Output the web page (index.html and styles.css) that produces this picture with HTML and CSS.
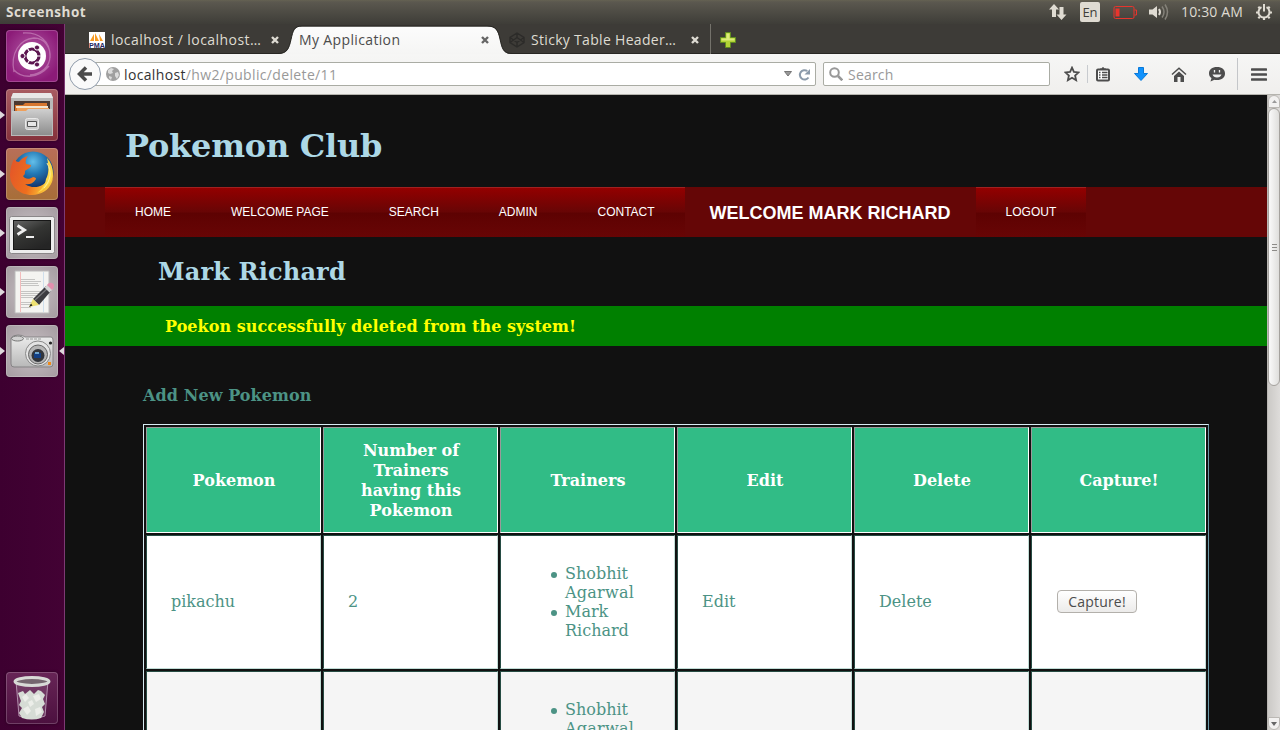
FILE: index.html
```html
<!DOCTYPE html>
<html lang="en">
<head>
<meta charset="utf-8">
<title>My Application</title>
<link rel="stylesheet" href="styles.css">
</head>
<body>
<div class="desktop">
  <header class="panel">
    <span class="panel-title">Screenshot</span>
    <div class="indicators">
      <svg class="ind-net" width="18" height="18" viewBox="0 0 18 18" fill="#dfdbd2"><path d="M5 1l5 5.500H7V14H3V6.500H0zM12.500 17l5-5.500h-3V4h-4v7.500h-3z"/></svg>
      <span class="lang">En</span>
      <svg class="ind-bat" width="24" height="13" viewBox="0 0 24 13"><rect x="1" y=".5" width="20" height="12" rx="1.500" fill="none" stroke="#e8352d"/><path d="M2.500 2.500h4v8h-4z" fill="#e8352d"/><path d="M21.500 4h2v5h-2" fill="none" stroke="#e8352d"/></svg>
      <svg class="ind-vol" width="21" height="18" viewBox="0 0 21 18"><path d="M1 6.500h3.500L9 3v12l-4.500-3.500H1z" fill="#dfdbd2"/><path d="M11 6q2 3 0 6" stroke="#dfdbd2" stroke-width="2" fill="none"/><path d="M14 3.500q4 5.500 0 11M17 1.500q5 7.500 0 15" stroke="#85827a" stroke-width="1.500" fill="none"/></svg>
      <span class="clock">10:30 AM</span>
      <svg class="ind-gear" width="18" height="18" viewBox="0 0 18 18" fill="none" stroke="#dfdbd2"><path d="M6.500 4.200a5.500 5.500 0 1 0 5 0" stroke-width="2"/><path d="M9 1v7.500" stroke-width="2"/><path d="M3.500 9.500H1M17 9.500h-2.500M9 14.500V17M4.800 5.300L3.300 3.800M13.200 5.300l1.500-1.500M4.800 13.700l-1.500 1.500M13.200 13.700l1.500 1.500" stroke-width="2.200"/></svg>
    </div>
  </header>

  <div class="workspace">
    <aside class="launcher">
      <div class="tile tile-dash">
        <svg viewBox="0 0 52 52"><g fill="none" stroke="#d59acb" stroke-opacity=".55" stroke-width="1.300"><path d="M8 42C4 23 14 9 28 8c11 0 17 10 16 20M17 3c16-1 27 8 27 23 0 11-9 18-20 19M8 40c7 8 23 10 35-4"/></g><circle cx="26" cy="26" r="14" fill="#fff"/><circle cx="26" cy="26" r="7" fill="none" stroke="#5c1650" stroke-width="3.200"/><path d="M26 26L38 26M26 26l-6-10M26 26l-6 10" stroke="#fff" stroke-width="1.200"/><g fill="#5c1650" stroke="#fff"><circle cx="16.500" cy="26" r="2.600"/><circle cx="31" cy="17.500" r="2.600"/><circle cx="31" cy="34.500" r="2.600"/></g><circle cx="26" cy="26" r="5.200" fill="#fff"/></svg>
      </div>
      <div class="tile tile-files running">
        <svg viewBox="0 0 52 52"><defs><linearGradient id="cab" x2="0" y2="1"><stop stop-color="#cfcfcf"/><stop offset="1" stop-color="#8d8d8d"/></linearGradient></defs><path d="M7 4h38l2 5v38H5V9z" fill="#b9b9b9"/><path d="M7 4h38l2 5H5z" fill="#e8e8e8"/><path d="M8 12h36v10H8z" fill="#4b3932"/><path d="M9 16h8l2-2h22v8H9z" fill="#d8762e"/><path d="M10 17h32v2H10z" fill="#f5e5cf"/><path d="M11 19h32v3H11z" fill="#efa05b"/><path d="M6 22h14l2-2h24v26H6z" fill="url(#cab)"/><rect x="19.500" y="29.500" width="13" height="11" rx="2" fill="#ccc" stroke="#e8e8e8"/><path d="M21.500 32.500h9v5h-9z" fill="#e7e7e7" stroke="#555"/></svg>
      </div>
      <div class="tile tile-firefox running">
        <svg viewBox="0 0 52 52"><defs><radialGradient id="globe" cx=".5" cy=".25" r=".65"><stop stop-color="#63bfea"/><stop offset=".45" stop-color="#2479b5"/><stop offset="1" stop-color="#122f66"/></radialGradient><linearGradient id="fox" x1="0" x2="1" y2=".3"><stop stop-color="#e2532a"/><stop offset=".6" stop-color="#ee6f1e"/><stop offset="1" stop-color="#fbc63a"/></linearGradient></defs><circle cx="27" cy="24" r="20.500" fill="url(#globe)"/><path d="M8 11c1 2 3 3 5 3 2-3 5-5 9-6-2 3-3 5-2 8l5 1c0 3-4 4-6 6 0 2 0 4-2 5 2 3 6 4 10 1 2 0 3 1 3 2-3 5-8 6-11 5 8 6 20 3 23-6 2-5 2-9 1-14 4 5 5 12 3 18-3 8-11 13-20 13C13 47 4 38 4 27c0-7 2-12 4-16z" fill="url(#fox)"/><path d="M41 10c8 9 8 22-1 29-3 3-6 5-9 6 5-4 8-8 9-14 3-5 3-13 1-21z" fill="#fdd94a"/><path d="M41 15c5 9 4 17-3 25" stroke="#fff1a0" fill="none"/></svg>
      </div>
      <div class="tile tile-gray running">
        <svg viewBox="0 0 52 52"><defs><linearGradient id="term" x2=".6" y2="1"><stop stop-color="#666"/><stop offset=".5" stop-color="#343533"/><stop offset="1" stop-color="#252525"/></linearGradient></defs><rect x="3.500" y="9.500" width="45" height="37" rx="2" fill="#ededed" stroke="#8b8789"/><rect x="7.500" y="13.500" width="37" height="29" fill="url(#term)" stroke="#171717"/><path d="M11.500 18.500l7 4.500-7 4.500" fill="none" stroke="#eee" stroke-width="2.800"/><path d="M20 30h8" stroke="#eee" stroke-width="2"/></svg>
      </div>
      <div class="tile tile-gray running">
        <svg viewBox="0 0 52 52"><path d="M9 5h34v42H9z" fill="#f4f4f1" stroke="#bbb"/><path d="M14.500 6v40" stroke="#f2bcbc"/><path d="M37.500 6v40" stroke="#cfdfec"/><path d="M15 13.500h14M15 15.500h20M15 17.500h17M15 19.500h18M15 25.500h20M15 27.500h18M15 29.500h19M15 31.500h12M15 36.500h12M15 38.500h11M15 41.500h10" stroke="#b9b9b7" stroke-width=".8"/><path d="M27 33L40 20l5 5-12 14z" fill="#3d3d40"/><path d="M29 34l13-12" stroke="#77777a" stroke-width="1.200"/><path d="M38.500 21.500l3-3 5 5-3 3z" fill="#d5d5d5"/><path d="M41 19q2-3 5-2t1.500 5L46 24z" fill="#e28fae"/><path d="M23 41l4-8 6 6z" fill="#eee171"/><path d="M23 41l2-3.500 1.500 2z" fill="#222"/></svg>
      </div>
      <div class="tile tile-gray running focused">
        <svg viewBox="0 0 52 52"><defs><linearGradient id="cam" x2="0" y2="1"><stop stop-color="#eee"/><stop offset="1" stop-color="#b8b8b8"/></linearGradient></defs><path d="M5 13q2-3 7-3 5 0 7 2h26q2 0 2 3v24q0 3-3 3H8q-3 0-3-3V16z" fill="url(#cam)" stroke="#858385"/><ellipse cx="11.500" cy="13.500" rx="6" ry="2.500" fill="#d1d1d1" stroke="#777"/><path d="M20 14h16" stroke="#999" stroke-dasharray="3 1"/><circle cx="32" cy="28.500" r="12.500" fill="#e4e4e4" stroke="#888"/><circle cx="32" cy="29.500" r="9.500" fill="#b5b5b5" stroke="#666"/><circle cx="32" cy="30.500" r="6.500" fill="#33363b"/><path d="M28 28h7v5h-7z" fill="#123f84"/><path d="M29 27h4v2h-4z" fill="#6fa5cd"/><circle cx="44.500" cy="18" r="1.600" fill="#222"/><path d="M42 37h3v3h-3z" fill="#f18a19"/></svg>
      </div>
      <div class="tile tile-trash">
        <svg viewBox="0 0 52 52"><path d="M10 9l3 35q13 5 26 0l3-35" fill="#fff" fill-opacity=".12" stroke="#c7a9c3" stroke-width=".8"/><path d="M12 21l5-2 2 3 5-4 4 4 4-4 3 1 4 4-2 4 2 5-3 3 2 5-3 6q-9 3-19 0l-3-5 3-5-3-3 2-4z" fill="#d6dcd5"/><path d="M16 25l4-3 3 4-4 4zM27 24l6-2 2 5-5 3zM17 37l5-3 3 5-4 4zM29 37l5-2 2 5-6 4zM22 30l4-2 2 4-4 3z" fill="#eceee9"/><ellipse cx="26" cy="9.500" rx="17" ry="4" fill="#75666f" stroke="#d8dad6" stroke-width="3"/></svg>
      </div>
    </aside>

    <main class="browser">
      <div class="tabs">
        <div class="tab tab-first">
          <svg class="favicon" viewBox="0 0 16 16"><path fill="#fff" d="M0 0h16v16H0z"/><path d="M1 9l4-7v7zM6 9V1l4 8zM10 2l4 7h-3z" fill="#f79a20"/><text x="0" y="15.500" class="pma" textLength="16" lengthAdjust="spacingAndGlyphs">PMA</text></svg>
          <span class="tab-label label-one">localhost / localhost…</span>
          <svg class="close" viewBox="0 0 8 8"><path d="M1 1l6 6M7 1L1 7"/></svg>
        </div>
        <div class="tab tab-active">
          <svg class="tab-shape" width="240" height="30" viewBox="0 0 240 30"><defs><linearGradient id="tg" x2="0" y2="1"><stop stop-color="#fcfcfc"/><stop offset="1" stop-color="#f5f5f4"/></linearGradient></defs><path d="M2 30c9 0 11-5 13-14S18 2.500 26 2.500H211c9 0 11 4 13 13s3 14.500 12 14.500z" fill="url(#tg)"/><path d="M2 29.500c9 0 11-5 13-14S18 2 26 2H211c9 0 11 4 13 13s3 14.500 12 14.500" fill="none" stroke="#282723"/></svg>
          <span class="tab-label label-two">My Application</span>
          <svg class="close" viewBox="0 0 8 8"><path d="M1 1l6 6M7 1L1 7"/></svg>
        </div>
        <div class="tab tab-last">
          <svg class="favicon" viewBox="0 0 16 16" fill="none" stroke="#2c2b29" stroke-width="1.400"><path d="M8 1l7 4.500v5L8 15l-7-4.500v-5zM8 1v4.500M8 10.500V15M1 5.500l7 5 7-5M1 10.500l7-5 7 5"/></svg>
          <span class="tab-label label-three">Sticky Table Header…</span>
          <svg class="close" viewBox="0 0 8 8"><path d="M1 1l6 6M7 1L1 7"/></svg>
        </div>
        <svg class="new-tab" viewBox="0 0 16 16"><path d="M5.500.5h5v5h5v5h-5v5h-5v-5h-5v-5h5z" fill="#b2d235" stroke="#608c20"/><path d="M6.500 1.500h3v5h5v2h-13v-2h5z" fill="#dceb7d"/></svg>
      </div>

      <div class="toolbar">
        <div class="back"><svg width="18" height="18" viewBox="0 0 18 18"><path d="M16 9H4M10 2.500L3.500 9l6.500 6.500" fill="none" stroke="#4b4b4b" stroke-width="3.500"/></svg></div>
        <div class="url">
          <svg class="globe" viewBox="0 0 14 14"><circle cx="7" cy="7" r="7" fill="#a0a0a0"/><path d="M2 3l3-2 3 1-2 2 1 2-3 1-2-1zM9 6l3-1 1 3-2 4-2-3zM3 9l3 1-1 3-2-2z" fill="#dcdcdc"/></svg>
          <span class="url-text"><span class="host">localhost</span>/hw2/public/delete/11</span>
          <svg class="drop" width="8" height="6" viewBox="0 0 8 6"><path d="M.5.5h7L4 5z" fill="#999" stroke="#777"/></svg>
          <svg class="reload" width="13" height="13" viewBox="0 0 13 13"><path d="M10.500 9.500A4.700 4.700 0 1 1 9.300 3" fill="none" stroke="#8b9aaa" stroke-width="2"/><path d="M12 1v5.500H6.500z" fill="#8b9aaa"/></svg>
        </div>
        <div class="search">
          <svg width="14" height="14" viewBox="0 0 14 14" fill="none" stroke="#989898"><circle cx="5.500" cy="5.500" r="4.300" stroke-width="2"/><path d="M9 9l4.300 4.300" stroke-width="2.600"/></svg>
          <span class="placeholder">Search</span>
        </div>
        <div class="actions">
          <svg class="star" width="16" height="16" viewBox="0 0 16 16"><path d="M8 1.700l1.900 4.200 4.700.5-3.500 3.100 1 4.700L8 11.800l-4.100 2.400 1-4.700-3.500-3.100 4.700-.5z" fill="none" stroke="#4d4d4d" stroke-width="1.800"/></svg>
          <i class="thin"></i>
          <svg class="clip" width="14" height="16" viewBox="0 0 14 16"><rect x="1" y="3.500" width="12" height="11" rx="1" fill="#fff" stroke="#4d4d4d" stroke-width="2"/><path d="M4 4V2.500h1.500q1.500-3 3 0H10V4z" fill="#4d4d4d"/><path d="M3 6.500h1.500M6 6.500h5.500M3 9h1.500M6 9h5.500M3 11.500h1.500M6 11.500h5.500" stroke="#4d4d4d" stroke-width="1.400"/></svg>
          <svg class="down" width="14" height="14" viewBox="0 0 14 14"><path d="M4.500.5h5v6h4L7 13.500.5 6.500h4z" fill="#1192fc" stroke="#0879d9"/></svg>
          <svg class="home" width="16" height="15" viewBox="0 0 16 15"><path d="M1 7.500l7-6.300 7 6.300" fill="none" stroke="#4d4d4d" stroke-width="1.500"/><path d="M3 9l5-4.500L13 9v6H9.500v-5h-3v5H3z" fill="#4d4d4d"/></svg>
          <svg class="chat" width="16" height="16" viewBox="0 0 16 16"><path d="M8 1c5 0 8 2.500 8 6.500S13 14 8 14c-1 0-2 0-2.500-.3L1.500 15.500l1-3.500C1 11 0 9.500 0 7.500 0 3.500 3 1 8 1z" fill="#4d4d4d"/><path d="M5.500 4v2.500M10.500 4v2.500" stroke="#eee" stroke-width="1.300"/><path d="M3.500 8.500h9q-1 3-4.500 3t-4.500-3z" fill="#eee"/></svg>
          <i class="tall"></i>
          <svg class="menu" width="16" height="13" viewBox="0 0 16 13"><path d="M1 1.500h14M1 6.500h14M1 11.500h14" stroke="#4d4d4d" stroke-width="2.600" stroke-linecap="round"/></svg>
        </div>
      </div>

      <div class="viewport">
        <div class="page">
          <h1>Pokemon Club</h1>
          <nav class="nav">
            <a>HOME</a><a>WELCOME PAGE</a><a>SEARCH</a><a>ADMIN</a><a>CONTACT</a>
            <strong>WELCOME MARK RICHARD</strong><a>LOGOUT</a>
          </nav>
          <h2>Mark Richard</h2>
          <div class="flash">Poekon successfully deleted from the system!</div>
          <div class="add">Add New Pokemon</div>
          <table class="grid">
            <thead><tr><th>Pokemon</th><th>Number of Trainers having this Pokemon</th><th>Trainers</th><th>Edit</th><th>Delete</th><th>Capture!</th></tr></thead>
            <tbody>
              <tr><td>pikachu</td><td>2</td><td class="trainers"><ul><li>Shobhit <span class="wide">Agarwal</span></li><li>Mark Richard</li></ul></td><td>Edit</td><td>Delete</td><td><button class="capture">Capture!</button></td></tr>
              <tr class="alt"><td></td><td></td><td class="trainers"><ul><li>Shobhit <span class="wide">Agarwal</span></li><li>Mark Richard</li></ul></td><td></td><td></td><td></td></tr>
            </tbody>
          </table>
        </div>
        <div class="scrollbar">
          <div class="sb-button"><svg width="5" height="3" viewBox="0 0 5 3"><path d="M0 3L2.500 0 5 3z" fill="#999"/></svg></div>
          <div class="thumb"><i></i><i></i><i></i></div>
          <div class="sb-button sb-down"><svg width="6" height="4" viewBox="0 0 6 4"><path d="M0 0h6L3 4z" fill="#666"/></svg></div>
        </div>
      </div>
    </main>
  </div>
</div>
</body>
</html>
```
FILE: styles.css
```css
* { box-sizing: border-box; }
body { margin: 0; font-family: "DejaVu Serif", serif; }
svg { display: block; flex: none; }
.desktop { width: 1280px; height: 730px; overflow: hidden; display: flex; flex-direction: column; }

.panel { height: 24px; flex: none; display: flex; align-items: center; justify-content: space-between; padding: 0 7px 0 6px; background: linear-gradient(#656252 0, #5b584f 2px, #3e3d38 24px); color: #dfdbd2; font-family: "Open Sans", sans-serif; font-size: 14px; }
.panel-title { font-weight: 700; font-size: 13.5px; line-height: 24px; letter-spacing: .5px; }
.indicators { display: flex; align-items: center; height: 24px; }
.lang { width: 20px; height: 20px; margin: 0 13px 0 13px; border-radius: 2px; background: #dfdbd2; color: #403f3a; font-size: 13px; line-height: 21px; text-align: center; }
.ind-vol { margin-left: 11px; }
.clock { width: 63px; margin: 0 11px 0 12px; white-space: nowrap; letter-spacing: .15px; line-height: 24px; }

.workspace { display: flex; flex: 1; min-height: 0; }
.launcher { width: 65px; flex: none; display: flex; flex-direction: column; gap: 7px; padding: 6px 6px 6px; background: linear-gradient(90deg, #3d0030, #430234); border-right: 1px solid #7d3a74; }
.tile { position: relative; width: 52px; height: 52px; flex: none; border-radius: 4px; box-shadow: inset 0 0 0 1px rgba(255,255,255,.2), 0 0 3px rgba(0,0,0,.4); }
.tile svg { width: 52px; height: 52px; }
.tile-dash { background: radial-gradient(circle at 50% 45%, #b35ba6, #8c1b78 75%); }
.tile-files { background: linear-gradient(#a85c62, #85313b); }
.tile-firefox { background: linear-gradient(#b86f58, #a76e38); }
.tile-gray { background: radial-gradient(#c8c0c4, #a49ba0); }
.tile-trash { margin-top: auto; background: linear-gradient(#672556, #4c103f); }
.running::before { content: ""; position: absolute; left: -6px; top: 22px; border: 4px solid transparent; border-left: 5px solid #ded8dc; border-right: 0; }
.focused::after { content: ""; position: absolute; right: -6px; top: 22px; border: 4px solid transparent; border-right: 5px solid #ded8dc; border-left: 0; }

.browser { flex: 1; min-width: 0; display: flex; flex-direction: column; }
.tabs { height: 30px; flex: none; display: flex; background: #3d3b37; border-bottom: 1px solid #282723; font-family: "Open Sans", sans-serif; font-size: 14px; color: #dfdbd2; }
.tab { display: flex; align-items: center; height: 30px; padding-top: 2px; }
.tab-label { flex: none; white-space: nowrap; line-height: 18px; }
.tab-first { width: 211px; padding-left: 24px; }
.favicon { width: 16px; height: 16px; margin-right: 6px; }
.pma { font: 700 7px "Liberation Sans", sans-serif; fill: #26285f; }
.label-one { width: 160px; letter-spacing: .44px; }
.close { width: 8px; height: 8px; stroke: #dedbd3; stroke-width: 2.400; }
.tab-active { position: relative; width: 234px; padding-left: 23px; color: #4c4c4c; z-index: 1; }
.tab-shape { position: absolute; left: 0; top: 0; }
.tab-active .tab-label, .tab-active .close { z-index: 1; }
.tab-active .close { stroke: #666; }
.label-two { width: 182px; letter-spacing: .36px; }
.tab-last { width: 201px; border-right: 1px solid #74726b; }
.tab-last .favicon { margin-left: -1px; margin-right: 6px; }
.label-three { width: 160px; letter-spacing: .31px; }
.new-tab { width: 16px; height: 16px; margin: 8px 0 0 9px; }

.toolbar { height: 41px; flex: none; display: flex; align-items: center; padding-left: 4px; background: linear-gradient(#f6f6f5, #f0efed); border-bottom: 1px solid #b5b4ae; font-family: "Open Sans", sans-serif; font-size: 14px; color: #999; }
.back { width: 32px; height: 32px; flex: none; z-index: 1; display: flex; align-items: center; justify-content: center; border: 1px solid #8f9baa; border-radius: 50%; background: #fafafa; }
.url { height: 24px; width: 723px; margin-left: -8px; display: flex; align-items: center; padding-left: 12px; background: #fff; border: 1px solid #aaaca4; border-radius: 2px; }
.globe { width: 14px; height: 14px; margin-right: 4px; }
.url-text { flex: 1; white-space: nowrap; letter-spacing: .35px; }
.host { color: #333; }
.reload { margin: 0 4px 0 6px; }
.search { width: 227px; height: 24px; margin-left: 7px; display: flex; align-items: center; gap: 5px; padding-left: 5px; background: #fff; border: 1px solid #aaaca4; border-radius: 2px; }
.placeholder { letter-spacing: .2px; }
.actions { flex: 1; display: flex; align-items: center; padding-left: 14px; }
.thin { width: 1px; height: 18px; margin: 0 8px 0 7px; background: #c8cbcf; }
.down { margin-left: 24px; }
.home { margin-left: 23px; }
.chat { margin-left: 22px; }
.tall { width: 1px; height: 32px; margin: 0 13px 0 12px; background: #c4c6c9; }

.viewport { flex: 1; min-height: 0; display: flex; background: #111; }
.page { width: 1202px; overflow: hidden; }
h1 { margin: 0; height: 92px; padding: 32px 0 0 60px; font-size: 32px; line-height: 38px; letter-spacing: -.23px; color: #add8e6; }
.nav { height: 50px; display: flex; padding-left: 40px; background: #650606; font-family: "Liberation Sans", sans-serif; color: #fff; }
.nav a { height: 50px; padding: 0 30px; border-top: 1px solid #a12020; font-size: 12px; line-height: 49px; background: linear-gradient(#930000 0, #680505 48%, #5d0202 52%, #680505 100%); }
.nav strong { padding: 0 25px; font-size: 18px; line-height: 52px; }
h2 { margin: 0; height: 69px; padding: 21px 0 0 93px; font-size: 24px; line-height: 28px; letter-spacing: .17px; color: #add8e6; }
.flash { height: 40px; padding: 1px 0 0 100px; background: green; color: #ff0; font-weight: 700; font-size: 16px; line-height: 40px; letter-spacing: .04px; }
.add { height: 78px; padding: 40px 0 0 78px; color: #4c9385; font-weight: 700; font-size: 16px; line-height: 20px; letter-spacing: .08px; }
.grid { width: 1066px; margin-left: 78px; table-layout: fixed; border-collapse: separate; border-spacing: 2px; border: 1px solid; border-color: #d7ecf3 #6997a6 #6997a6 #d7ecf3; }
.grid th { height: 106px; padding: 13px 24px 11px 25px; background: #31bc86; border: 1px solid; border-color: #9a9a9a #fff #fff #9a9a9a; color: #fff; font-size: 16px; line-height: 20px; }
.grid td { height: 134px; padding: 11px 24px 13px; background: #fff; border: 1px solid; border-color: #274c44 #c1dcd6 #c1dcd6 #274c44; color: #4c9385; font-size: 16px; line-height: 19px; }
.grid .trainers { padding: 12px 24px; }
.grid .alt td { background: #f5f5f5; }
.grid ul { margin: 0; padding-left: 40px; list-style: none; }
.grid li::before { content: ""; float: left; width: 6px; height: 6px; margin: 8px 0 0 -14px; border-radius: 50%; background: #4c9385; }
.wide { letter-spacing: .25px; }
.capture { display: block; width: 80px; height: 23px; margin-left: 1px; padding: 0; border: 1px solid #b3b0ab; border-radius: 4px; background: linear-gradient(#fff, #ecebea); color: #4c4c4c; font: 14px "Open Sans", sans-serif; letter-spacing: .2px; }

.scrollbar { width: 13px; flex: none; display: flex; flex-direction: column; background: linear-gradient(90deg, #cbc9c6, #dedcda); border-left: 1px solid #bbb8b4; }
.sb-button { height: 13px; flex: none; display: flex; align-items: center; justify-content: center; border: 1px solid #bbb8b4; border-radius: 6px 6px 0 0; background: #f2f1f0; }
.thumb { height: 278px; display: flex; flex-direction: column; align-items: center; justify-content: center; gap: 2px; border: 1px solid #a5a29e; border-radius: 6px; background: linear-gradient(90deg, #fafafa, #dfdedc); }
.thumb i { width: 5px; height: 1px; background: #8d8b88; }
.sb-down { margin-top: auto; border-radius: 0 0 6px 6px; }
```
